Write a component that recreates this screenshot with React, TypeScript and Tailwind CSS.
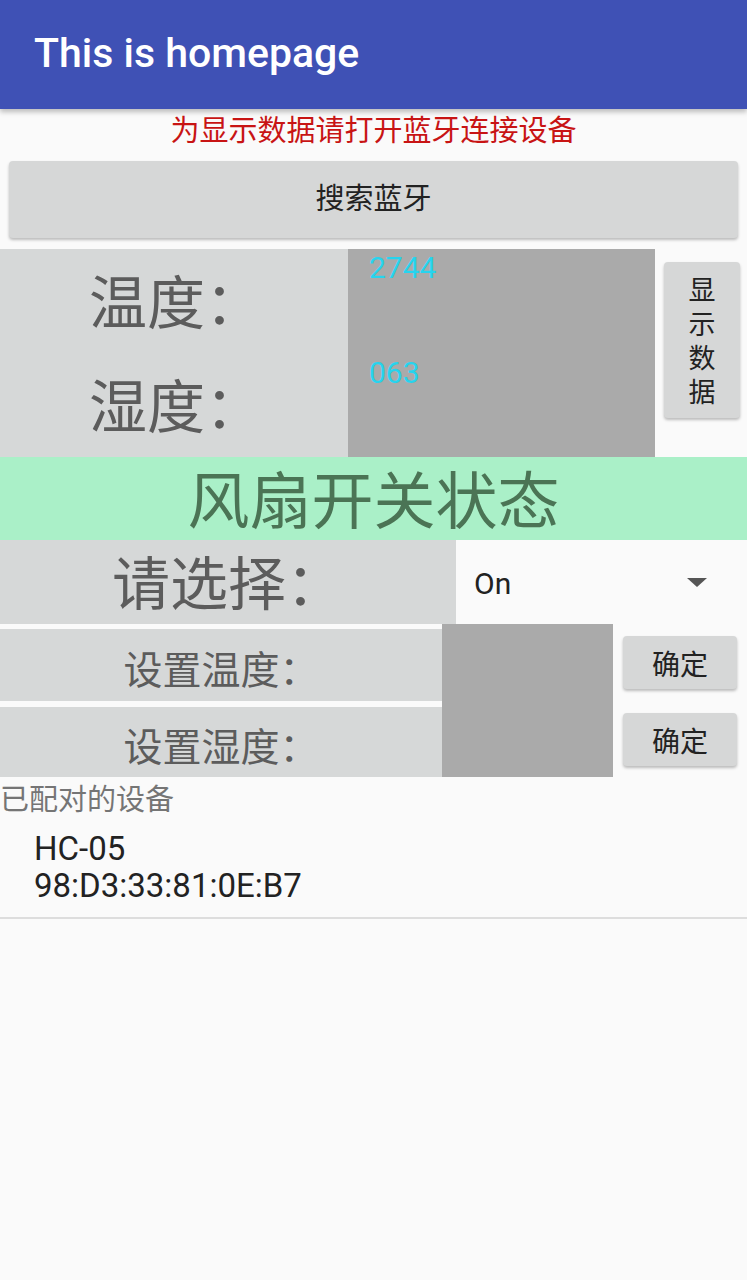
const font = { fontFamily: 'Roboto, "Noto Sans CJK SC", sans-serif' };

function GrayButton({ children, className }: { children: React.ReactNode; className: string }) {
  return (
    <div
      className={`flex items-center justify-center rounded-[4px] bg-[#d6d7d7] text-[#222] shadow-[0_2px_3px_rgba(0,0,0,0.25)] ${className}`}
    >
      {children}
    </div>
  );
}

export default function App() {
  return (
    <div className="min-h-[1280px] w-[747px] bg-[#fafafa]" style={font}>
      <div className="relative z-10 flex h-[109px] items-center bg-[#3f51b5] px-[34px] shadow-[0_3px_5px_rgba(0,0,0,0.25)]">
        <h1 className="pb-[2px] text-[41px] font-medium text-white">This is homepage</h1>
      </div>

      <p className="flex h-[44px] items-center justify-center pt-[2px] text-[29px] text-[#c81414]">
        为显示数据请打开蓝牙连接设备
      </p>

      <GrayButton className="mx-[9px] mt-[8px] h-[77px] text-[29px]">搜索蓝牙</GrayButton>

      {/* current readings */}
      <div className="mt-[11px] flex h-[208px]">
        <div className="flex w-[348px] flex-col bg-[#d6d8d8] text-[58px] text-[#5c5c5c]">
          <div className="flex h-[104px] items-center justify-center pl-[4px] pt-[6px]">温度：</div>
          <div className="flex h-[104px] items-center justify-center pl-[4px] pt-[6px]">湿度：</div>
        </div>
        <div className="flex w-[307px] flex-col bg-[#aaaaaa] pl-[21px] text-[30px] text-[#26d4ee]">
          <div className="h-[104px] leading-[38px]">2744</div>
          <div className="h-[104px] leading-[40px]">063</div>
        </div>
        <div className="flex-1 pl-[9px] pt-[13px]">
          <GrayButton className="h-[156px] w-[76px] flex-col pt-[3px] text-[27px] leading-[34px]">
            <span>显</span>
            <span>示</span>
            <span>数</span>
            <span>据</span>
          </GrayButton>
        </div>
      </div>

      <div className="flex h-[83px] items-center justify-center bg-[#aaf0c8] pt-[8px] text-[62px] text-[#4b7455]">
        风扇开关状态
      </div>

      <div className="flex h-[84px]">
        <div className="flex w-[456px] items-center justify-center bg-[#d6d8d8] pt-[6px] text-[58px] text-[#5c5c5c]">
          请选择：
        </div>
        <div className="flex flex-1 items-center justify-between pl-[18px] pr-[40px]">
          <span className="pt-[2px] text-[30px] text-[#222]">On</span>
          <span className="h-0 w-0 border-x-[10px] border-t-[9px] border-x-transparent border-t-[#555]" />
        </div>
      </div>

      {/* thresholds */}
      <div className="flex h-[153px]">
        <div className="flex w-[442px] flex-col text-[39px] text-[#5c5c5c]">
          <div className="mt-[5px] flex h-[72px] items-center justify-center bg-[#d6d8d8] pt-[12px]">设置温度：</div>
          <div className="mt-[6px] flex h-[70px] items-center justify-center bg-[#d6d8d8] pt-[12px]">设置湿度：</div>
        </div>
        <div className="w-[171px] bg-[#aaaaaa]" />
        <div className="flex flex-col pl-[10px]">
          <GrayButton className="mt-[12px] h-[53px] w-[114px] pt-[6px] text-[28px]">确定</GrayButton>
          <GrayButton className="mt-[24px] h-[53px] w-[114px] pt-[6px] text-[28px]">确定</GrayButton>
        </div>
      </div>

      <p className="flex h-[44px] items-center pt-[3px] text-[29px] text-[#757575]">已配对的设备</p>

      <div className="flex flex-col border-b-2 border-[#dddddd] pb-[13px] pl-[34px] pt-[9px] text-[33px] leading-[37px] text-[#222]">
        <span>HC-05</span>
        <span>98:D3:33:81:0E:B7</span>
      </div>
    </div>
  );
}
